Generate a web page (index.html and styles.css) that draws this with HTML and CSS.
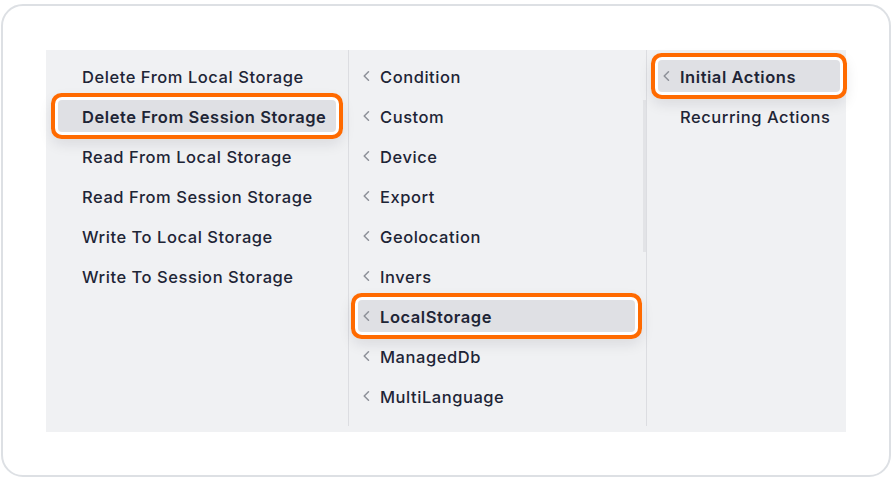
FILE: index.html
```html
<!DOCTYPE html>
<html lang="en">
<head>
<meta charset="utf-8">
<title>Menu</title>
<link rel="stylesheet" href="styles.css">
</head>
<body>
<div class="card">
  <div class="panel">
    <div class="col col-1">
      <div class="item"><span class="slot"></span><span class="label">Delete From Local Storage</span></div>
      <div class="item selected"><span class="slot"></span><span class="label">Delete From Session Storage</span></div>
      <div class="item"><span class="slot"></span><span class="label">Read From Local Storage</span></div>
      <div class="item"><span class="slot"></span><span class="label">Read From Session Storage</span></div>
      <div class="item"><span class="slot"></span><span class="label">Write To Local Storage</span></div>
      <div class="item"><span class="slot"></span><span class="label">Write To Session Storage</span></div>
    </div>
    <div class="col col-2">
      <div class="item"><svg class="slot" viewBox="0 0 12 12"><path d="M6.5 1.8 L2.2 6 L6.5 10.2"/></svg><span class="label">Condition</span></div>
      <div class="item"><svg class="slot" viewBox="0 0 12 12"><path d="M6.5 1.8 L2.2 6 L6.5 10.2"/></svg><span class="label">Custom</span></div>
      <div class="item"><svg class="slot" viewBox="0 0 12 12"><path d="M6.5 1.8 L2.2 6 L6.5 10.2"/></svg><span class="label">Device</span></div>
      <div class="item"><svg class="slot" viewBox="0 0 12 12"><path d="M6.5 1.8 L2.2 6 L6.5 10.2"/></svg><span class="label">Export</span></div>
      <div class="item"><svg class="slot" viewBox="0 0 12 12"><path d="M6.5 1.8 L2.2 6 L6.5 10.2"/></svg><span class="label">Geolocation</span></div>
      <div class="item"><svg class="slot" viewBox="0 0 12 12"><path d="M6.5 1.8 L2.2 6 L6.5 10.2"/></svg><span class="label">Invers</span></div>
      <div class="item selected"><svg class="slot" viewBox="0 0 12 12"><path d="M6.5 1.8 L2.2 6 L6.5 10.2"/></svg><span class="label">LocalStorage</span></div>
      <div class="item"><svg class="slot" viewBox="0 0 12 12"><path d="M6.5 1.8 L2.2 6 L6.5 10.2"/></svg><span class="label">ManagedDb</span></div>
      <div class="item"><svg class="slot" viewBox="0 0 12 12"><path d="M6.5 1.8 L2.2 6 L6.5 10.2"/></svg><span class="label">MultiLanguage</span></div>
      <div class="scroll-thumb"></div>
    </div>
    <div class="col col-3">
      <div class="item selected"><svg class="slot" viewBox="0 0 12 12"><path d="M6.5 1.8 L2.2 6 L6.5 10.2"/></svg><span class="label">Initial Actions</span></div>
      <div class="item"><span class="slot"></span><span class="label">Recurring Actions</span></div>
    </div>
  </div>
</div>
</body>
</html>
```
FILE: styles.css
```css
* { box-sizing: border-box; }

html, body {
  margin: 0;
  padding: 0;
  background: #ffffff;
}

body {
  font-family: Inter, "Noto Sans", "Liberation Sans", sans-serif;
  color: #1e2536;
}

.card {
  margin: 4px 1px 0 1px;
  height: 473px;
  border: 2px solid #dde0e4;
  border-radius: 22px;
  padding: 44px 43px 43px 43px;
  background: #ffffff;
}

.panel {
  display: grid;
  grid-template-columns: 303px 298px 1fr;
  height: 382px;
  background: #f0f1f3;
  padding-bottom: 6px;
}

.col {
  position: relative;
  display: flex;
  flex-direction: column;
  gap: 8px;
  padding-top: 10px;
}

.col-1 {
  border-right: 1px solid #dcdde1;
  padding-left: 12px;
  padding-right: 12px;
}

.col-2 {
  border-right: 1px solid #dcdde1;
  padding-left: 9px;
  padding-right: 11px;
}

.col-3 {
  padding-left: 11px;
  padding-right: 6px;
}

.item {
  display: flex;
  align-items: center;
  height: 32px;
  flex: 0 0 32px;
  padding-left: 4px;
  padding-top: 2px;
  border-radius: 4px;
  font-size: 16.5px;
  font-weight: 500;
  letter-spacing: 0.55px;
  white-space: nowrap;
}

.col-1 .item {
  padding-left: 6px;
}

.slot {
  display: block;
  flex: 0 0 12px;
  width: 12px;
  height: 12px;
  margin-right: 6px;
}

svg.slot {
  margin-top: -2px;
}

svg.slot path {
  fill: none;
  stroke: #8d9098;
  stroke-width: 1.5;
  stroke-linecap: round;
  stroke-linejoin: round;
}

.item.selected {
  background: #dfe0e4;
  font-weight: 600;
  box-shadow:
    0 0 0 3px #ffffff,
    0 0 0 7px #ff6a00,
    0 6px 14px 6px rgba(20, 24, 40, 0.10);
}

.scroll-thumb {
  position: absolute;
  right: 0;
  top: 50px;
  width: 3px;
  height: 152px;
  background: #e2e3e6;
}
```
